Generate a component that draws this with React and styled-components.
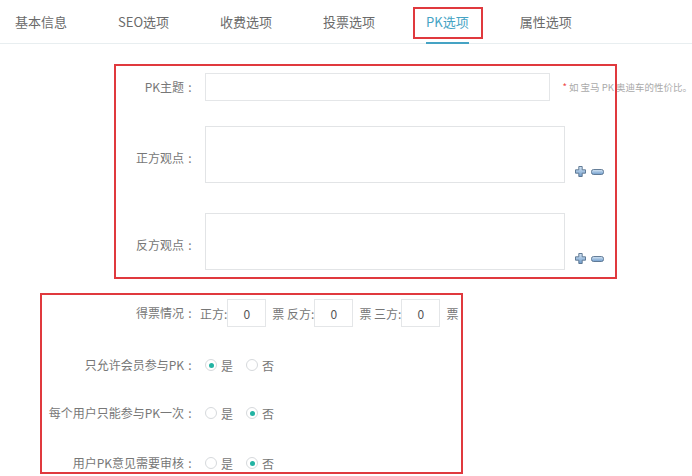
import React, { useState } from "react";
import styled, { createGlobalStyle } from "styled-components";

const GlobalStyle = createGlobalStyle`
  body {
    margin: 0;
    background: #fff;
    font-family: "Noto Sans CJK SC", "Liberation Sans", sans-serif;
    color: #666;
  }
`;

const TABS = ["基本信息", "SEO选项", "收费选项", "投票选项", "PK选项", "属性选项"];

function PlusIcon() {
  return (
    <svg width="11" height="11" viewBox="0 0 11 11">
      <defs>
        <linearGradient id="pm" x1="0" y1="0" x2="0" y2="1">
          <stop offset="0" stopColor="#d6e6f5" />
          <stop offset="1" stopColor="#6f9ccb" />
        </linearGradient>
      </defs>
      <path
        d="M3.8 0.5h3.4v3.3h3.3v3.4H7.2v3.3H3.8V7.2H0.5V3.8h3.3z"
        fill="url(#pm)"
        stroke="#56708c"
        strokeWidth="0.9"
        strokeLinejoin="round"
      />
    </svg>
  );
}

function MinusIcon() {
  return (
    <svg width="13" height="6" viewBox="0 0 13 6">
      <defs>
        <linearGradient id="mm" x1="0" y1="0" x2="0" y2="1">
          <stop offset="0" stopColor="#d6e6f5" />
          <stop offset="1" stopColor="#6f9ccb" />
        </linearGradient>
      </defs>
      <rect x="0.5" y="0.5" width="12" height="5" rx="2" fill="url(#mm)" stroke="#56708c" strokeWidth="0.9" />
    </svg>
  );
}

function RadioGroup({ value, onChange }) {
  return (
    <Radios>
      <RadioItem onClick={() => onChange(true)}>
        <Dot $on={value} />是
      </RadioItem>
      <RadioItem onClick={() => onChange(false)}>
        <Dot $on={!value} />否
      </RadioItem>
    </Radios>
  );
}

function FieldLabel({ children, shift }) {
  return (
    <Label $shift={shift}>
      {children}
      <Colon>:</Colon>
    </Label>
  );
}

export default function App() {
  const [memberOnly, setMemberOnly] = useState(true);
  const [once, setOnce] = useState(false);
  const [review, setReview] = useState(false);

  return (
    <Page>
      <GlobalStyle />
      <TabBar>
        {TABS.map(t => (
          <Tab key={t} $active={t === "PK选项"}>
            {t}
          </Tab>
        ))}
      </TabBar>

      <Form>
        <Row $top={29}>
          <FieldLabel>PK主题</FieldLabel>
          <TextInput />
          <Hint>
            <em>*</em> 如 宝马 PK 奥迪车的性价比。
          </Hint>
        </Row>
        <Row $top={25}>
          <FieldLabel shift={3}>正方观点</FieldLabel>
          <TextArea />
          <Tools>
            <PlusIcon />
            <MinusIcon />
          </Tools>
        </Row>
        <Row $top={30}>
          <FieldLabel shift={3}>反方观点</FieldLabel>
          <TextArea />
          <Tools>
            <PlusIcon />
            <MinusIcon />
          </Tools>
        </Row>
        <Row $top={29}>
          <FieldLabel>得票情况</FieldLabel>
          <Votes>
            正方:<VoteInput defaultValue="0" />
            <span>票 反方:</span>
            <VoteInput defaultValue="0" />
            <span>票 三方:</span>
            <VoteInput defaultValue="0" />
            <span>票</span>
          </Votes>
        </Row>
        <Row $top={28}>
          <FieldLabel>只允许会员参与PK</FieldLabel>
          <RadioGroup value={memberOnly} onChange={setMemberOnly} />
        </Row>
        <Row $top={28}>
          <FieldLabel>每个用户只能参与PK一次</FieldLabel>
          <RadioGroup value={once} onChange={setOnce} />
        </Row>
        <Row $top={30}>
          <FieldLabel>用户PK意见需要审核</FieldLabel>
          <RadioGroup value={review} onChange={setReview} />
        </Row>
      </Form>

      {/* annotation boxes drawn over the screenshot */}
      <Mark style={{ left: 413, top: 7, width: 70, height: 32 }} />
      <Mark style={{ left: 114, top: 64, width: 503, height: 215 }} />
      <Mark style={{ left: 40, top: 293, width: 423, height: 181 }} />
    </Page>
  );
}

const Page = styled.div`
  position: relative;
  width: 692px;
  height: 476px;
  overflow: hidden;
`;

const TabBar = styled.div`
  display: flex;
  gap: 51px;
  height: 43px;
  padding-left: 15px;
  border-bottom: 1px solid #e8eef0;
`;

const Tab = styled.div`
  display: flex;
  align-items: center;
  height: 42px;
  font-size: 13px;
  color: ${({ $active }) => ($active ? "#45a3c4" : "#6a6a6a")};
  border-bottom: 2px solid ${({ $active }) => ($active ? "#45a3c4" : "transparent")};
  margin-bottom: -1px;
  white-space: nowrap;
`;

const Form = styled.div`
  display: flex;
  flex-direction: column;
  font-size: 12px;
`;

const Row = styled.div`
  display: flex;
  align-items: center;
  gap: 9px;
  margin-top: ${({ $top }) => $top}px;
  white-space: nowrap;
`;

const Label = styled.div`
  display: flex;
  justify-content: flex-end;
  width: 196px;
  flex-shrink: 0;
  color: #777;
  line-height: 20px;
  padding-top: ${({ $shift }) => ($shift || 0) * 2}px;
`;

const Colon = styled.span`
  display: inline-block;
  width: 12px;
  text-align: center;
`;

const TextInput = styled.input`
  box-sizing: border-box;
  width: 349px;
  height: 28px;
  border: 1px solid #e4e6e8;
  outline: none;
  padding: 0 8px;
`;

const Hint = styled.span`
  margin-left: 3px;
  font-size: 9.5px;
  color: #aaa;
  em {
    font-style: normal;
    color: #e44;
  }
`;

const TextArea = styled.textarea`
  box-sizing: border-box;
  width: 360px;
  height: 57px;
  border: 1px solid #e2e4e6;
  outline: none;
  resize: none;
  padding: 6px 8px;
  margin: 0;
`;

const Tools = styled.div`
  display: flex;
  align-items: center;
  gap: 5px;
  align-self: flex-end;
  margin: 0 0 6px 1px;
`;

const Votes = styled.div`
  display: flex;
  align-items: center;
  margin-left: -5px;
  color: #777;
  span {
    margin-left: 6px;
  }
`;

const VoteInput = styled.input`
  box-sizing: border-box;
  width: 39px;
  height: 28px;
  margin-left: 0;
  border: 1px solid #e4e6e8;
  outline: none;
  text-align: center;
  font-size: 12px;
  font-family: "Noto Sans CJK SC", "Liberation Sans", sans-serif;
  color: #555;
`;

const Radios = styled.div`
  display: flex;
  align-items: center;
  gap: 13px;
  height: 20px;
`;

const RadioItem = styled.label`
  display: flex;
  align-items: center;
  gap: 4px;
  color: #777;
  cursor: pointer;
`;

const Dot = styled.span`
  box-sizing: border-box;
  width: 12px;
  height: 12px;
  border-radius: 50%;
  border: 1px solid #d6d9dc;
  display: flex;
  align-items: center;
  justify-content: center;
  &::after {
    content: "";
    width: 5px;
    height: 5px;
    border-radius: 50%;
    background: ${({ $on }) => ($on ? "#22b3a3" : "transparent")};
  }
`;

const Mark = styled.div`
  position: absolute;
  box-sizing: border-box;
  border: 2px solid #e0393e;
  pointer-events: none;
`;
